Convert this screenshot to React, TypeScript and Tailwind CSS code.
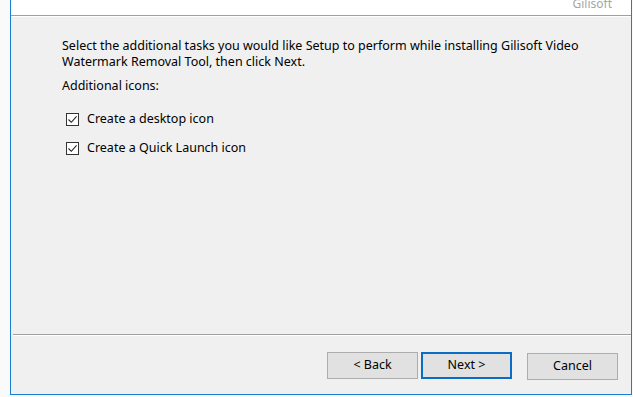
import React from 'react'

const font = { fontFamily: '"Noto Sans", "Segoe UI", sans-serif' }

function Check({ label }: { label: string }) {
  return (
    <label className="flex items-center gap-[8px] h-[16px]">
      <span className="w-[13px] h-[13px] border border-[#333] bg-white flex items-center justify-center">
        <svg width="11" height="11" viewBox="0 0 11 11">
          <path d="M1.5 5.5 L4.3 8.3 L9.6 2.4" fill="none" stroke="#222" strokeWidth="1.1" />
        </svg>
      </span>
      <span>{label}</span>
    </label>
  )
}

function Btn({ label, primary }: { label: string; primary?: boolean }) {
  return (
    <button
      className={`w-[91px] h-[27px] bg-[#e1e1e1] text-[12.5px] text-black ${
        primary ? 'border-2 border-[#0a6cc4]' : 'border border-[#adadad]'
      }`}
    >
      {label}
    </button>
  )
}

export default function App() {
  return (
    <div className="w-[633px] h-[397px] bg-[#fafafa] overflow-hidden" style={font}>
      <div className="ml-[10px] w-[622px] h-[395px] flex flex-col border-l border-r border-b border-[#1a7fd4] bg-[#f0f0f0]">
        <div className="h-[15px] bg-white overflow-hidden flex justify-end pr-[19px]">
          <span className="text-[12px] leading-[14px] -mt-[3px] text-[#a6a6a6]">Gilisoft</span>
        </div>
        <div className="h-px bg-[#a0a0a0]" />
        <div className="h-px bg-white" />

        <div className="flex-1 pl-[51px] pt-[21px] text-[12.5px] text-black">
          <p className="leading-[16px] w-[545px]">
            Select the additional tasks you would like Setup to perform while installing Gilisoft Video
            Watermark Removal Tool, then click Next.
          </p>
          <p className="mt-[8px] leading-[16px]">Additional icons:</p>
          <div className="mt-[17px] ml-[4px] flex flex-col gap-[13px]">
            <Check label="Create a desktop icon" />
            <Check label="Create a Quick Launch icon" />
          </div>
        </div>

        <div className="ml-[2px] h-px bg-[#a0a0a0]" />
        <div className="ml-[2px] h-px bg-white" />
        <div className="h-[58px] flex items-start pt-[16px] pl-[316px] gap-[3px]">
          <Btn label="< Back" />
          <Btn label="Next >" primary />
          <div className="ml-[12px]">
            <Btn label="Cancel" />
          </div>
        </div>
      </div>
    </div>
  )
}
